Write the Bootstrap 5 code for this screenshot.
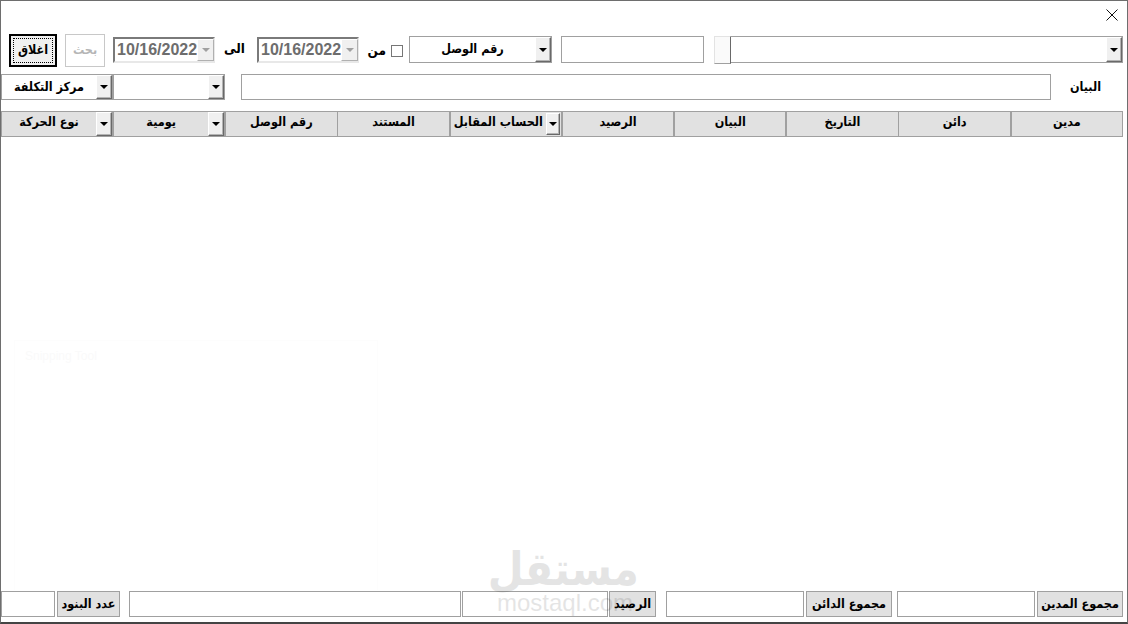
<!DOCTYPE html>
<html lang="ar" dir="rtl">
<head>
    <meta charset="UTF-8">
    <meta name="viewport" content="width=device-width, initial-scale=1.0">
    <title>كشف حساب</title>
    <link href="https://cdn.jsdelivr.net/npm/bootstrap@5.3.0/dist/css/bootstrap.min.css" rel="stylesheet">
    <style>
        html, body { height: 100%; }
        body { font-family: "DejaVu Sans Condensed", "DejaVu Sans", sans-serif; font-size: 12.5px; font-weight: 700; color: #000; background: #fff; overflow: hidden; }
        .win { height: 624px; border: 1px solid #6e6e6e; border-bottom-width: 2px; border-bottom-color: #444; position: relative; padding-bottom: 4px; }
        .close-row { height: 33px; padding: 8px 9px 0 0; }
        .close-x { width: 12px; height: 12px; display: block; }
        .row-one { height: 33px; padding-right: 4px; }
        .row-two { height: 26px; margin-top: 7px; padding-right: 26px; }
        .head-row { height: 26px; margin-top: 11px; padding-right: 4px; }
        .foot-row { height: 26px; padding-right: 4px; }

        .fld { height: 27px; border: 1px solid #a0a0a0; border-radius: 0; background: #fff; padding: 0; box-shadow: none; min-height: 0; font-size: 12.5px; }
        .row-one .fld, .row-one .combo { margin-top: 2px; }
        .row-two .fld, .foot-row .fld { height: 26px; }
        .combo { height: 27px; border: 1px solid #a0a0a0; background: #fff; display: flex; align-items: center; }
        .combo-text { flex: 1; text-align: center; line-height: 1; white-space: nowrap; }
        .arrow-btn { flex: none; width: 16px; height: 25px; background: #f0f0f0; border: 1px solid; border-color: #fff #696969 #696969 #fff; box-shadow: -1px -1px 0 #b4b4b4 inset; display: flex; align-items: center; justify-content: center; }
        .arrow-btn::after { content: ""; border: 4px solid transparent; border-top-color: #000; border-bottom-width: 0; }
        .arrow-off { border-color: #fff #b0b0b0 #b0b0b0 #fff; box-shadow: none; }
        .arrow-off::after { border-top-color: #a0a0a0; }

        .w-main-combo { width: 409px; margin-left: 10px; position: relative; }
        .thumb { position: absolute; left: -1px; top: -1px; width: 17px; height: 28px; background: #fafafa; border: 1px solid; border-color: #e3e3e3 #696969 #a0a0a0 #e3e3e3; }
        .w-143 { width: 143px; }
        .gap-9 { margin-left: 9px; }
        .gap-6 { margin-left: 6px; }
        .chk { width: 12px; height: 12px; margin: 1px 0 0 5px; flex: none; border: 1px solid #767676; background: #fff; }
        .chk-label { width: 18px; margin-left: 9px; font-size: 13.5px; white-space: nowrap; }
        .date-box { width: 102px; height: 26px; margin-top: 3px; direction: ltr; display: flex; align-items: center; border: 2px solid; border-color: #7a7a7a #e8e8e8 #e8e8e8 #7a7a7a; background: #fff; color: #6d6d6d; font-family: "Liberation Sans", sans-serif; font-size: 16px; padding-left: 2px; }
        .date-box span { flex: 1; }
        .date-box .arrow-btn { width: 17px; height: 22px; }
        .date-gap { margin-left: 12px; }
        .ila { width: 17px; margin-left: 13px; font-size: 13.5px; margin-top: -5px; white-space: nowrap; }
        .btn-search { width: 40px; height: 33px; margin-left: 8px; padding: 0; border: 1px solid #c8c8c8; border-radius: 0; background: #fff; color: #b5b5b5; font-size: 12.5px; font-weight: 700; }
        .btn-search:disabled { border-color: #c8c8c8; background: #fff; color: #b5b5b5; opacity: 1; }
        .btn-close-win { width: 48px; height: 33px; padding: 0; border: 2px solid #000; border-radius: 0; background: #f0f0f0; color: #000; font-size: 12.5px; font-weight: 700; outline: 1px dotted #000; outline-offset: -5px; }

        .w-label { width: 31px; white-space: nowrap; margin-left: 19px; }
        .w-bayan { width: 810px; margin-left: 16px; }
        .w-cc { width: 112px; }
        .row-two .combo { height: 26px; }
        .row-two .arrow-btn { height: 24px; }

        .cell { flex: 1 1 0; min-width: 0; height: 26px; background: #e1e1e1; border: 1px solid #a0a0a0; display: flex; align-items: center; justify-content: center; white-space: nowrap; padding-bottom: 3px; margin-left: -0.2px; }
        .cell-combo { justify-content: flex-start; padding-bottom: 0; }
        .cell-combo .combo-text { padding-bottom: 3px; }
        .cell-combo .arrow-btn { height: 24px; }
        .cell-tight .arrow-btn { width: 14px; height: 22px; margin-right: 1px; }

        .grid-area { height: 454px; }
        .tag { height: 26px; padding: 0; border: 1px solid #a0a0a0; background: #e1e1e1; display: flex; align-items: center; justify-content: center; white-space: nowrap; }
        .t86 { width: 86px; }
        .t47 { width: 47px; }
        .t63 { width: 63px; }
        .f138 { width: 138px; }
        .f146 { width: 146px; }
        .f332 { width: 332px; }
        .f54 { width: 54px; }
        .m2 { margin-left: 2px; }
        .m5 { margin-left: 5px; }
        .m10 { margin-left: 10px; }
        .m9 { margin-left: 9px; }
        .m1 { margin-left: 1px; }

        .ghost { position: absolute; left: 13px; top: 339px; width: 364px; height: 250px; border: 1px solid #fdfdfd; border-bottom: 0; color: #fafafa; font-family: "Liberation Sans", sans-serif; font-weight: 400; font-size: 12px; padding: 6px 10px; direction: ltr; }
        .mark-wrap { position: absolute; left: 490px; top: 545px; width: 148px; text-align: center; color: #000; opacity: .1; pointer-events: none; line-height: 1; }
        .mark-ar { font-size: 46px; font-weight: 700; line-height: 46px; white-space: nowrap; }
        .mark-en { font-family: "Liberation Sans", sans-serif; font-weight: 400; font-size: 24px; line-height: 22px; direction: ltr; }
    </style>
</head>
<body>
    <div class="win d-flex flex-column">
        <div class="close-row d-flex">
            <svg class="close-x" viewBox="0 0 12 12"><path d="M.5.5 11.5 11.5M11.5.5.5 11.5" stroke="#111" stroke-width="1" fill="none"/></svg>
        </div>

        <div class="row-one d-flex align-items-start">
            <div class="combo w-main-combo">
                <div class="arrow-btn"></div>
                <div class="thumb"></div>
            </div>
            <input type="text" class="form-control fld w-143 gap-9">
            <div class="combo w-143 gap-6">
                <div class="arrow-btn"></div>
                <div class="combo-text">رقم الوصل</div>
            </div>
            <span class="chk align-self-center"></span>
            <span class="chk-label align-self-center">من</span>
            <div class="date-box date-gap"><span>10/16/2022</span><div class="arrow-btn arrow-off"></div></div>
            <span class="ila align-self-center">الى</span>
            <div class="date-box"><span>10/16/2022</span><div class="arrow-btn arrow-off"></div></div>
            <button type="button" class="btn btn-search me-2" disabled>بحث</button>
            <button type="button" class="btn btn-close-win">اغلاق</button>
        </div>

        <div class="row-two d-flex align-items-center">
            <span class="w-label">البيان</span>
            <input type="text" class="form-control fld w-bayan">
            <div class="combo w-cc"><div class="arrow-btn"></div><div class="combo-text"></div></div>
            <div class="combo w-cc"><div class="arrow-btn"></div><div class="combo-text">مركز التكلفة</div></div>
        </div>

        <div class="head-row d-flex">
            <div class="cell">مدين</div>
            <div class="cell">دائن</div>
            <div class="cell">التاريخ</div>
            <div class="cell">البيان</div>
            <div class="cell">الرصيد</div>
            <div class="cell cell-combo cell-tight"><div class="arrow-btn"></div><div class="combo-text">الحساب المقابل</div></div>
            <div class="cell">المستند</div>
            <div class="cell">رقم الوصل</div>
            <div class="cell cell-combo"><div class="arrow-btn"></div><div class="combo-text">يومية</div></div>
            <div class="cell cell-combo"><div class="arrow-btn"></div><div class="combo-text">نوع الحركة</div></div>
        </div>

        <div class="grid-area"></div>

        <div class="foot-row d-flex">
            <div class="tag t86 m2">مجموع المدين</div>
            <input type="text" class="form-control fld f138 m5">
            <div class="tag t86 m2">مجموع الدائن</div>
            <input type="text" class="form-control fld f138 m10">
            <div class="tag t47 m1">الرصيد</div>
            <input type="text" class="form-control fld f146 m1">
            <input type="text" class="form-control fld f332 m9">
            <div class="tag t63 m2">عدد البنود</div>
            <input type="text" class="form-control fld f54">
        </div>

        <div class="ghost">Snipping Tool</div>
        <div class="mark-wrap">
            <div class="mark-ar">مستقل</div>
            <div class="mark-en">mostaql.com</div>
        </div>
    </div>
    <script src="https://cdn.jsdelivr.net/npm/bootstrap@5.3.0/dist/js/bootstrap.bundle.min.js"></script>
</body>
</html>
